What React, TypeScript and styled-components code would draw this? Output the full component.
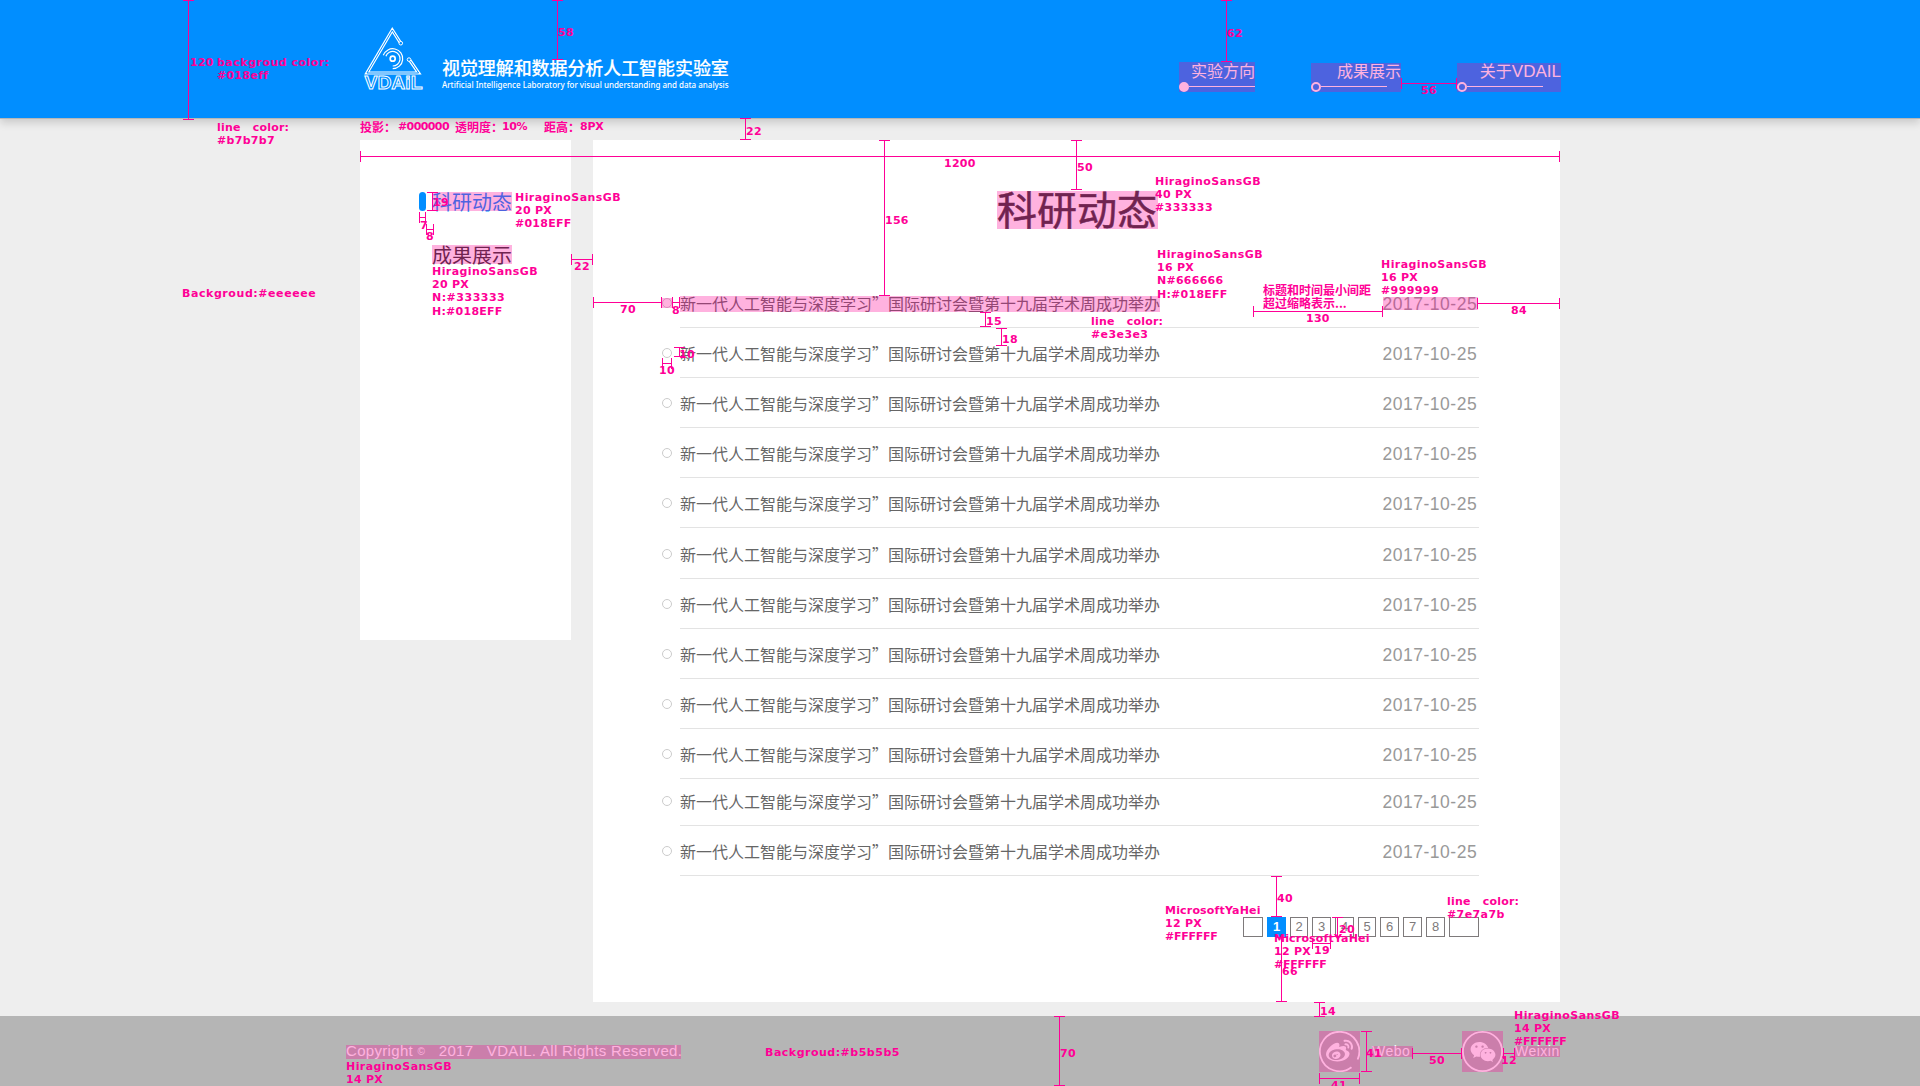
import React from "react";
import styled, { createGlobalStyle, css } from "styled-components";
import { FaWeibo, FaWeixin } from "react-icons/fa";

const BLUE = "#018eff";
const MARK = "#ff0096";
const CJK = `"Noto Sans CJK SC", sans-serif`;
const LATIN = `"Liberation Sans", "Noto Sans CJK SC", sans-serif`;

const GlobalStyle = createGlobalStyle`
  * { box-sizing: border-box; }
  body { margin: 0; background: #eeeeee; font-family: ${CJK}; }
`;

const tint = css`
  position: relative;
  &::after {
    content: "";
    position: absolute;
    inset: 0;
    background: rgba(255, 0, 150, 0.3);
  }
`;

const Page = styled.div`
  position: relative;
  width: 1920px;
  height: 1086px;
  overflow: hidden;
  background: #eeeeee;
`;

/* ---------- header ---------- */

const Header = styled.header`
  display: flex;
  align-items: flex-start;
  height: 119px;
  padding: 24px 359px 0 363px;
  background: ${BLUE};
  border-bottom: 1px solid #b7b7b7;
  box-shadow: 0 4px 8px rgba(0, 0, 0, 0.15);
`;

const Logo = styled.svg`
  display: block;
  width: 61px;
  height: 68px;
`;

const Brand = styled.div`
  display: flex;
  flex-direction: column;
  margin: 33px 0 0 18px;
  color: #fff;
  white-space: nowrap;
`;

const BrandName = styled.div`
  font-size: 18px;
  line-height: 20px;
  font-weight: 500;
  letter-spacing: -0.08px;
  -webkit-text-stroke: 0.15px #fff;
`;

const BrandSub = styled.div`
  margin-top: 3px;
  font: 500 8px/10px "Noto Sans", sans-serif;
  letter-spacing: -0.01px;
`;

const Nav = styled.nav`
  display: flex;
  align-items: flex-end;
  gap: 56px;
  height: 68px;
  margin-left: auto;
`;

const NavItem = styled.a<{ $w: number; $h: number }>`
  ${tint}
  display: flex;
  flex-direction: column;
  justify-content: flex-end;
  width: ${(p) => p.$w}px;
  height: ${(p) => p.$h}px;
  color: #fff;
`;

const NavLabel = styled.span`
  align-self: flex-end;
  font-size: 16px;
  line-height: 16px;
  margin-bottom: 4px;
  white-space: nowrap;
`;

const NavLatin = styled.span`
  font-family: ${LATIN};
  font-size: 17px;
  line-height: 0;
`;

const NavRail = styled.span`
  display: flex;
  align-items: center;
`;

const NavDot = styled.i<{ $on?: boolean }>`
  width: 10px;
  height: 10px;
  border: 2px solid #fff;
  border-radius: 50%;
  background: ${(p) => (p.$on ? "#fff" : "transparent")};
`;

const NavLine = styled.i<{ $w: number }>`
  width: ${(p) => p.$w}px;
  height: 1px;
  margin-bottom: 1px;
  background: #fff;
`;

/* ---------- body ---------- */

const Columns = styled.div`
  display: flex;
  align-items: flex-start;
  gap: 22px;
  width: 1200px;
  height: 876px;
  margin: 21px 0 0 360px;
`;

const Side = styled.aside`
  display: flex;
  flex-direction: column;
  gap: 34px;
  width: 211px;
  height: 500px;
  padding: 52px 0 0 59px;
  background: #fff;
`;

const SideItem = styled.div`
  display: flex;
  gap: 6px;
  height: 19px;
`;

const SideBar = styled.i<{ $on?: boolean }>`
  width: 7px;
  border-radius: 4px;
  background: ${(p) => (p.$on ? BLUE : "transparent")};
`;

const SideText = styled.span<{ $on?: boolean }>`
  ${tint}
  font-size: 20px;
  line-height: 19px;
  color: ${(p) => (p.$on ? BLUE : "#333")};
`;

const Main = styled.main`
  display: flex;
  flex-direction: column;
  width: 967px;
  height: 862px;
  padding: 51px 81px 0 69px;
  background: #fff;
`;

const Title = styled.h1`
  ${tint}
  width: 161px;
  height: 38px;
  margin: 0 0 52px 335px;
  font-size: 40px;
  line-height: 34px;
  font-weight: 400;
  color: #333;
  white-space: nowrap;
  -webkit-text-stroke: 0.5px #333;
`;

const Row = styled.div<{ $h: number }>`
  display: flex;
  align-items: flex-end;
  gap: 8px;
  height: ${(p) => p.$h}px;
`;

const Bullet = styled.i<{ $mark?: boolean }>`
  width: 10px;
  height: 10px;
  margin-bottom: 20px;
  border: 1px solid #ccc;
  border-radius: 50%;
  ${(p) =>
    p.$mark &&
    css`
      ${tint}
      &::after { inset: -1px; }
    `}
`;

const RowBody = styled.div`
  display: flex;
  flex: 1;
  align-items: flex-end;
  justify-content: space-between;
  padding-bottom: 15px;
  border-bottom: 1px solid #e3e3e3;
`;

const RowTitle = styled.span<{ $mark?: boolean }>`
  height: 16px;
  font-size: 16px;
  line-height: 14px;
  color: #666;
  white-space: nowrap;
  ${(p) => p.$mark && tint}
`;

const RowDate = styled.span<{ $mark?: boolean }>`
  width: 95px;
  height: 13px;
  margin: 0 1px 2px 0;
  font: 17.5px/15px ${LATIN};
  letter-spacing: 0.52px;
  text-indent: -0.5px;
  color: #999;
  white-space: nowrap;
  ${(p) => p.$mark && tint}
`;

const Pager = styled.div`
  display: flex;
  justify-content: flex-end;
  gap: 4px;
  margin-top: 41px;
`;

const PageBox = styled.span<{ $w: number; $on?: boolean }>`
  display: flex;
  align-items: center;
  justify-content: center;
  width: ${(p) => p.$w}px;
  height: 20px;
  border: 1px solid ${(p) => (p.$on ? BLUE : "#7e7a7b")};
  background: ${(p) => (p.$on ? BLUE : "#fff")};
  color: ${(p) => (p.$on ? "#fff" : "#7e7a7b")};
  font: ${(p) => (p.$on ? 700 : 400)} 13px/18px ${LATIN};
`;

/* ---------- footer ---------- */

const Footer = styled.footer`
  display: flex;
  align-items: flex-start;
  height: 70px;
  padding: 15px 360px 0 346px;
  background: #b5b5b5;
  color: #fff;
`;

const Copyright = styled.span`
  ${tint}
  width: 335px;
  height: 14px;
  margin-top: 14px;
  font: 15px/12px ${LATIN};
  letter-spacing: 0.32px;
  white-space: pre;
`;

const CopyMark = styled.span`
  font-size: 10px;
  line-height: 0;
  vertical-align: 1px;
`;

const Social = styled.div`
  display: flex;
  margin-left: auto;
`;

const SocialIcon = styled.span`
  ${tint}
  display: flex;
  align-items: center;
  justify-content: center;
  width: 41px;
  height: 41px;
`;

const Ring = styled.svg`
  position: absolute;
  inset: 0;
  width: 41px;
  height: 41px;
`;

const SocialText = styled.span<{ $w: number; $after: number }>`
  ${tint}
  width: ${(p) => p.$w}px;
  height: 11px;
  margin: 15px ${(p) => p.$after}px 0 12px;
  font: 14px/11px ${LATIN};
  letter-spacing: 0.5px;
`;

/* ---------- redline annotations, floating over the page ---------- */

const Note = styled.div<{ $x: number; $y: number; $ls?: number }>`
  position: absolute;
  left: ${(p) => p.$x}px;
  top: ${(p) => p.$y}px;
  font: 700 11px/13px "DejaVu Sans", "Noto Sans CJK SC", sans-serif;
  letter-spacing: ${(p) => p.$ls ?? 0.25}px;
  color: ${MARK};
  white-space: pre;
`;

const NoteCjk = styled(Note)`
  font: 700 12px/13px "Noto Sans CJK SC", sans-serif;
  letter-spacing: 0;
`;

const RuleV = styled.i<{ $x: number; $y: number; $len: number }>`
  position: absolute;
  left: ${(p) => p.$x - 5}px;
  top: ${(p) => p.$y}px;
  width: 11px;
  height: ${(p) => p.$len}px;
  border: solid ${MARK};
  border-width: 1px 0;
  background: linear-gradient(${MARK}, ${MARK}) 5px 0 / 1px 100% no-repeat;
`;

const RuleH = styled.i<{ $x: number; $y: number; $len: number }>`
  position: absolute;
  left: ${(p) => p.$x}px;
  top: ${(p) => p.$y - 5}px;
  width: ${(p) => p.$len}px;
  height: 11px;
  border: solid ${MARK};
  border-width: 0 1px;
  background: linear-gradient(${MARK}, ${MARK}) 0 5px / 100% 1px no-repeat;
`;

type Box = [number, number, number];

/* x, y, length */
const verticals: Box[] = [
  [188, 0, 120], [557, 0, 60], [1226, 0, 62], [745, 118, 22],
  [884, 140, 156], [1076, 140, 50], [432, 192, 19], [985, 312, 15],
  [1001, 328, 18], [679, 347, 10], [1276, 876, 41], [1281, 937, 65],
  [1337, 917, 20], [1319, 1002, 15], [1366, 1031, 41], [1059, 1016, 70],
];

const horizontals: Box[] = [
  [360, 156, 1200], [1401, 83, 56], [419, 217, 7], [426, 229, 8],
  [571, 259, 22], [593, 302, 69], [672, 302, 8], [662, 363, 10],
  [1253, 311, 130], [1477, 303, 83], [1312, 943, 19], [1319, 1078, 41],
  [1412, 1053, 50], [1503, 1053, 12],
];

/* x, top of capitals, text, letter spacing */
const notes: [number, number, string, number?][] = [
  [190, 58, "120"], [217, 58, "backgroud color:", 0.5], [217, 71, "#018eff", 0.35],
  [217, 123, "line   color:", 0.2], [217, 136, "#b7b7b7", 0.3],
  [558, 28, "58"], [1227, 29, "62"], [1421, 86, "56"], [746, 127, "22"],
  [944, 159, "1200"], [1077, 163, "50"], [885, 216, "156"],
  [433, 198, "19"], [420, 221, "7"], [426, 232, "8"], [574, 262, "22"], [620, 305, "70"],
  [515, 193, "HiraginoSansGB", 0.43], [515, 206, "20 PX"], [515, 219, "#018EFF"],
  [432, 267, "HiraginoSansGB", 0.43], [432, 280, "20 PX"], [432, 293, "N:#333333", 0.5], [432, 307, "H:#018EFF"],
  [182, 289, "Backgroud:#eeeeee", 0.57],
  [1155, 177, "HiraginoSansGB", 0.43], [1155, 190, "40 PX"], [1155, 203, "#333333", 0.4],
  [1157, 250, "HiraginoSansGB", 0.43], [1157, 263, "16 PX"], [1157, 276, "N#666666"], [1157, 290, "H:#018EFF"],
  [1381, 260, "HiraginoSansGB", 0.43], [1381, 273, "16 PX"], [1381, 286, "#999999", 0.4],
  [1306, 314, "130"], [1511, 306, "84"],
  [672, 306, "8"], [679, 350, "10"], [659, 366, "10"], [986, 317, "15"], [1002, 335, "18"],
  [1091, 317, "line   color:", 0.2], [1091, 330, "#e3e3e3", 0.4],
  [1277, 894, "40"], [1282, 967, "66"], [1339, 925, "20"], [1314, 946, "19"],
  [1165, 906, "MicrosoftYaHei", 0.18], [1165, 919, "12 PX"], [1165, 932, "#FFFFFF", -0.25],
  [1274, 934, "MicrosoftYaHei", 0.18], [1274, 947, "12 PX"], [1274, 960, "#FFFFFF", -0.25],
  [1447, 897, "line   color:", 0.2], [1447, 910, "#7e7a7b", 0.4],
  [1320, 1007, "14"], [1366, 1049, "41"], [1331, 1081, "41"], [1429, 1056, "50"], [1501, 1056, "12"],
  [1514, 1011, "HiraginoSansGB", 0.43], [1514, 1024, "14 PX"], [1514, 1037, "#FFFFFF", -0.25],
  [346, 1062, "HiraginoSansGB", 0.43], [346, 1075, "14 PX"],
  [765, 1048, "Backgroud:#b5b5b5", 0.5], [1060, 1049, "70"],
  [398, 122, "#000000", -0.6], [502, 122, "10%", -0.4], [580, 122, "8PX", -0.2],
];

const cjkNotes: [number, number, string][] = [
  [360, 120, "投影："], [455, 120, "透明度："], [544, 120, "距高："],
  [1263, 283, "标题和时间最小间距"], [1263, 296, "超过缩略表示..."],
];

const rowHeights = [47, 50, 50, 50, 50, 51, 50, 50, 50, 50, 47, 50];

const pages: [string, number][] = [
  ["", 20], ["1", 19], ["2", 18], ["3", 19], ["4", 19], ["5", 18],
  ["6", 19], ["7", 19], ["8", 19], ["", 30],
];

const trianglePath = "M37 18.2 L29.3 6 L4 49 H55.6 L47 36.5";

function LabLogo() {
  return (
    <Logo viewBox="0 0 61 68" fill="none">
      <path d={trianglePath} stroke="#fff" strokeWidth="3.2" />
      <path d={trianglePath} stroke={BLUE} strokeWidth="1" />
      <circle cx="37.8" cy="19.2" r="1.8" fill={BLUE} stroke="#fff" strokeWidth="1" />
      <circle cx="46" cy="35.6" r="1.8" fill={BLUE} stroke="#fff" strokeWidth="1" />
      <circle cx="29.7" cy="34.7" r="2.5" stroke="#fff" strokeWidth="1.7" />
      <path d="M20.3 31.3 A10 10 0 1 1 29.7 44.7" stroke="#fff" strokeWidth="1.2" />
      <path d="M22.9 32.2 A7.3 7.3 0 1 1 29.7 42" stroke="#fff" strokeWidth="1.2" />
      <text
        x="1.5" y="65" textLength="58" lengthAdjust="spacingAndGlyphs"
        fontFamily="Liberation Sans" fontWeight="700" fontSize="17.5"
        fill={BLUE} stroke="#fff" strokeWidth="0.9"
      >
        VDAiL
      </text>
    </Logo>
  );
}

export default function App() {
  return (
    <Page lang="zh-CN">
      <GlobalStyle />
      <Header>
        <LabLogo />
        <Brand>
          <BrandName>视觉理解和数据分析人工智能实验室</BrandName>
          <BrandSub>Artificial Intelligence Laboratory for visual understanding and data analysis</BrandSub>
        </Brand>
        <Nav>
          <NavItem $w={76} $h={30}>
            <NavLabel>实验方向</NavLabel>
            <NavRail><NavDot $on /><NavLine $w={66} /></NavRail>
          </NavItem>
          <NavItem $w={90} $h={29}>
            <NavLabel>成果展示</NavLabel>
            <NavRail><NavDot /><NavLine $w={66} /></NavRail>
          </NavItem>
          <NavItem $w={104} $h={29}>
            <NavLabel>关于<NavLatin>VDAIL</NavLatin></NavLabel>
            <NavRail><NavDot /><NavLine $w={76} /></NavRail>
          </NavItem>
        </Nav>
      </Header>

      <Columns>
        <Side>
          <SideItem><SideBar $on /><SideText $on>科研动态</SideText></SideItem>
          <SideItem><SideBar /><SideText>成果展示</SideText></SideItem>
        </Side>
        <Main>
          <Title>科研动态</Title>
          {rowHeights.map((h, i) => (
            <Row key={i} $h={h}>
              <Bullet $mark={i === 0} />
              <RowBody>
                <RowTitle $mark={i === 0}>新一代人工智能与深度学习”国际研讨会暨第十九届学术周成功举办</RowTitle>
                <RowDate $mark={i === 0}>2017-10-25</RowDate>
              </RowBody>
            </Row>
          ))}
          <Pager>
            {pages.map(([label, w], i) => (
              <PageBox key={i} $w={w} $on={label === "1"}>{label}</PageBox>
            ))}
          </Pager>
        </Main>
      </Columns>

      <Footer>
        <Copyright>Copyright <CopyMark>©</CopyMark>{"   2017   VDAIL. All Rights Reserved."}</Copyright>
        <Social>
          <SocialIcon>
            <Ring viewBox="0 0 41 41" fill="none">
              <path d="M38.6 28.5 A19.7 19.7 0 1 0 32.5 36.2" stroke="#fff" strokeWidth="1.8" />
            </Ring>
            <FaWeibo size={27} />
          </SocialIcon>
          <SocialText $w={41} $after={49}>Webo</SocialText>
          <SocialIcon>
            <Ring viewBox="0 0 41 41" fill="none">
              <circle cx="20.5" cy="20.5" r="19.6" stroke="#fff" strokeWidth="1.8" />
            </Ring>
            <FaWeixin size={26} />
          </SocialIcon>
          <SocialText $w={45} $after={0}>Weixin</SocialText>
        </Social>
      </Footer>

      {verticals.map(([x, y, len]) => <RuleV key={`v${x}-${y}`} $x={x} $y={y} $len={len} />)}
      {horizontals.map(([x, y, len]) => <RuleH key={`h${x}-${y}`} $x={x} $y={y} $len={len} />)}
      {notes.map(([x, y, text, ls]) => (
        <Note key={`n${x}-${y}`} $x={x} $y={y - 2} $ls={ls}>{text}</Note>
      ))}
      {cjkNotes.map(([x, y, text]) => (
        <NoteCjk key={`c${x}-${y}`} $x={x} $y={y}>{text}</NoteCjk>
      ))}
    </Page>
  );
}
